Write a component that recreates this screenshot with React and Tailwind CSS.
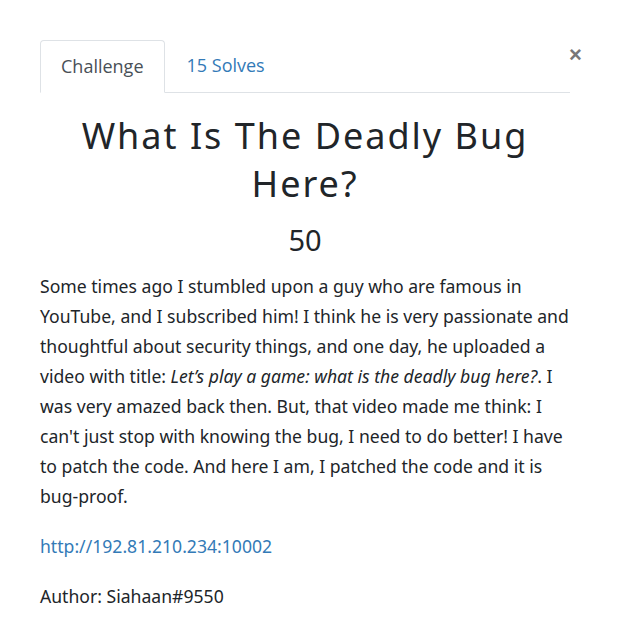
export default function App() {
  return (
    <div className="relative min-h-[621px] w-[621px] bg-white text-[#212529]">
      <button className="absolute left-[569px] top-[44px] text-[22px] font-bold leading-none text-[#777] font-['Liberation_Sans',sans-serif]">
        ×
      </button>
      <div className="w-[570px] pl-[40px] pt-[40px]">
        {/* Tabs */}
        <div className="flex border-b border-[#dee2e6] font-['Open_Sans',sans-serif] text-[18px] leading-[27px]">
          <div className="-mb-px rounded-t-[4px] border border-[#dee2e6] border-b-white bg-white px-[20px] py-[12px] text-[#495057]">
            Challenge
          </div>
          <div className="px-[22px] py-[12px] text-[#337ab7]">15 Solves</div>
        </div>

        {/* Title */}
        <h1 className="mt-[19px] text-center font-['Noto_Sans',sans-serif] text-[36px] leading-[48px] tracking-[2px] text-[#212529]">
          What Is The Deadly Bug Here?
        </h1>
        <div className="mt-[12px] text-center font-['Noto_Sans',sans-serif] text-[29px] leading-[40px]">50</div>

        {/* Description */}
        <div className="mt-[11px] w-[560px] whitespace-nowrap font-['Noto_Sans',sans-serif] text-[17.6px] leading-[30px]">
          <p>
            Some times ago I stumbled upon a guy who are famous in<br />
            YouTube, and I subscribed him! I think he is very passionate and<br />
            thoughtful about security things, and one day, he uploaded a<br />
            video with title: <em>Let’s play a game: what is the deadly bug here?</em>. I<br />
            was very amazed back then. But, that video made me think: I<br />
            can't just stop with knowing the bug, I need to do better! I have<br />
            to patch the code. And here I am, I patched the code and it is<br />
            bug-proof.
          </p>
          <p className="mt-[20px]">
            <a className="text-[#337ab7]" href="#">http://192.81.210.234:10002</a>
          </p>
          <p className="mt-[20px]">Author: Siahaan#9550</p>
        </div>
      </div>
    </div>
  );
}
